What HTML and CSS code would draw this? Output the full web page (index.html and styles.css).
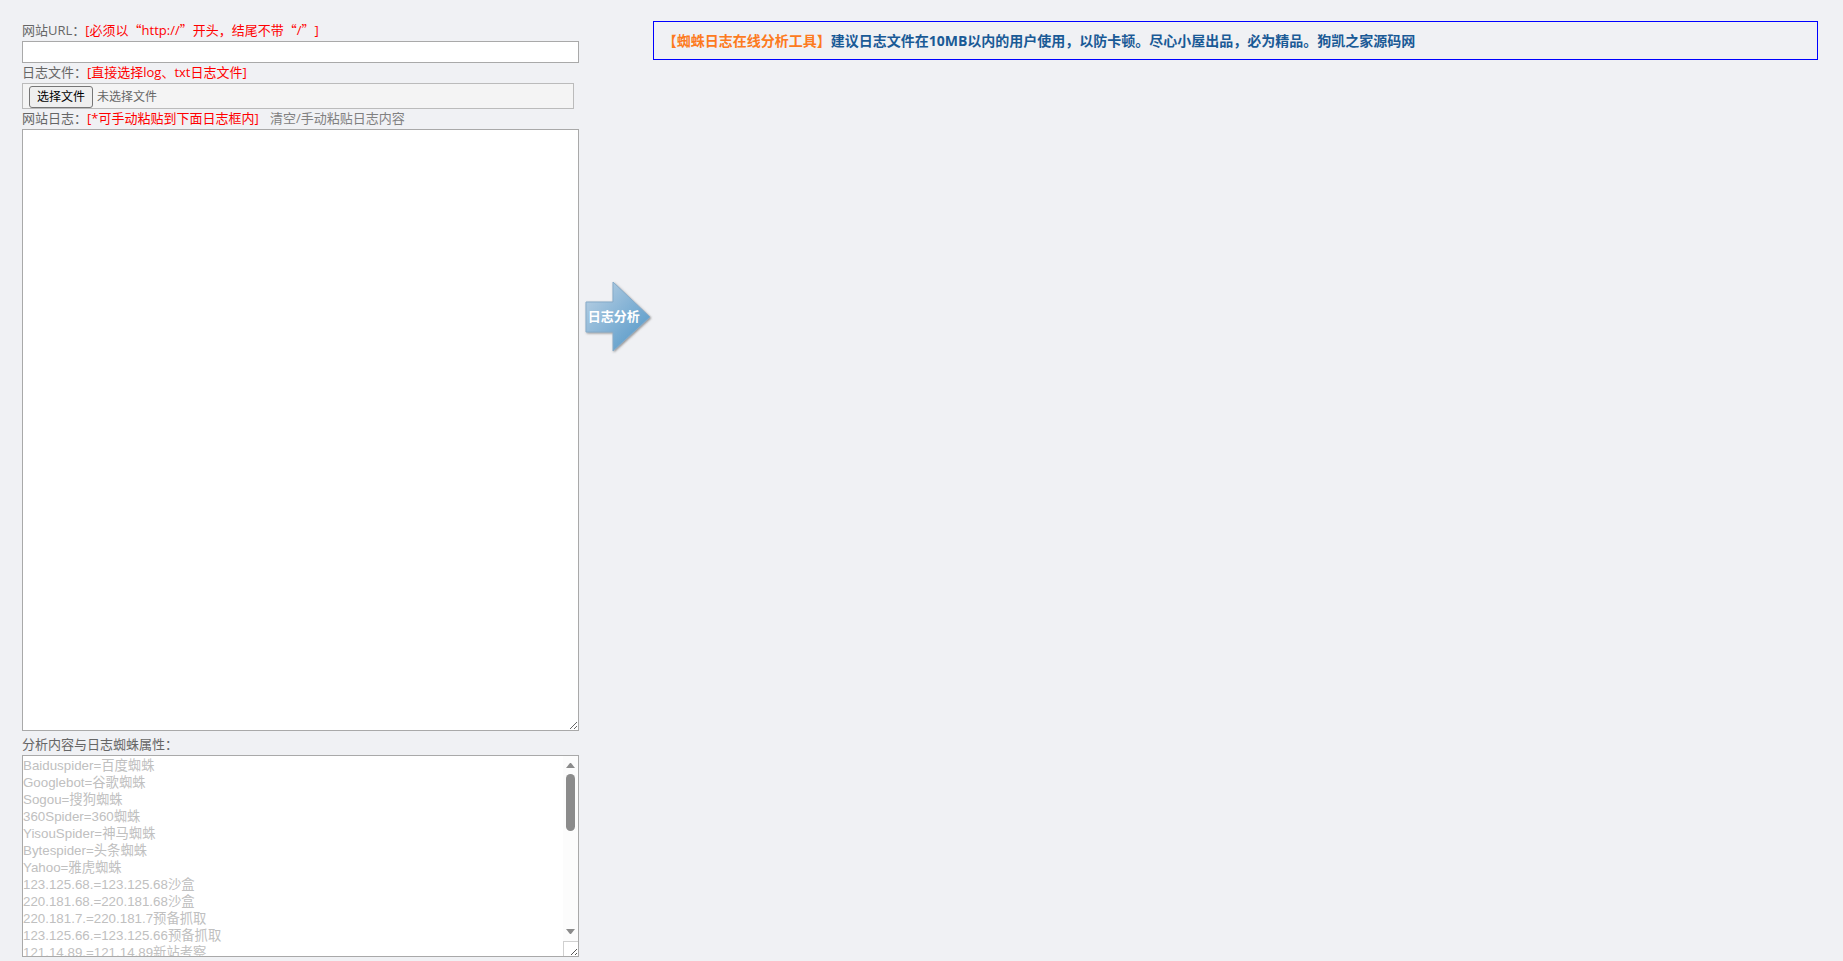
FILE: index.html
```html
<!DOCTYPE html>
<html lang="zh-CN">
<head>
    <meta charset="UTF-8">
    <meta name="viewport" content="width=device-width, initial-scale=1.0">
    <title>蜘蛛日志在线分析工具</title>
    <link rel="stylesheet" href="styles.css">
</head>
<body>

<form class="main" action="#" method="post" enctype="multipart/form-data">
    <div class="left">
        <div class="row-title">
            <label for="url">网站URL：</label><span class="red">[必须以<span class="quote">“</span>http://<span class="quote">”</span>开头，结尾不带<span class="quote">“</span>/<span class="quote">”</span>]</span>
        </div>
        <input type="text" class="url" id="url" name="url">

        <div class="row-title">
            <label for="logfile">日志文件：</label><span class="red">[直接选择log、txt日志文件]</span>
        </div>
        <div class="file-box">
            <label class="file-button">选择文件<input type="file" id="logfile" name="logfile" accept=".log,.txt"></label>
            <span class="file-name">未选择文件</span>
        </div>

        <div class="row-title">
            <label for="log">网站日志：</label><span class="red">[*可手动粘贴到下面日志框内]</span>
            <a class="clear" href="#">清空/手动粘贴日志内容</a>
        </div>
        <textarea class="log" id="log" name="log"></textarea>

        <div class="row-title spider-title">
            <label for="spider">分析内容与日志蜘蛛属性：</label>
        </div>
        <div class="spider-box">
            <textarea class="spider" id="spider" name="spider">Baiduspider=百度蜘蛛
Googlebot=谷歌蜘蛛
Sogou=搜狗蜘蛛
360Spider=360蜘蛛
YisouSpider=神马蜘蛛
Bytespider=头条蜘蛛
Yahoo=雅虎蜘蛛
123.125.68.=123.125.68沙盒
220.181.68.=220.181.68沙盒
220.181.7.=220.181.7预备抓取
123.125.66.=123.125.66预备抓取
121.14.89.=121.14.89新站考察</textarea>
            <div class="scrollbar" aria-hidden="true">
                <svg width="9" height="5" viewBox="0 0 9 5"><path d="M0 5L4 0H5L9 5Z" fill="#8b8b8b"/></svg>
                <div class="thumb"></div>
                <svg width="9" height="5" viewBox="0 0 9 5"><path d="M0 0L4 5H5L9 0Z" fill="#8b8b8b"/></svg>
            </div>
            <div class="corner" aria-hidden="true">
                <svg width="15" height="15" viewBox="0 0 15 15"><path d="M7 13L13 7M11 13L13 11" fill="none" stroke="#555" stroke-width="1"/></svg>
            </div>
        </div>
    </div>

    <div class="middle">
        <button type="submit" class="arrow">
            <svg width="70" height="76" viewBox="0 0 70 76" aria-hidden="true">
                <defs>
                    <linearGradient id="arrowFill" x1="0" y1="0" x2="1" y2="1">
                        <stop offset="0.1" stop-color="#b4cde2"/>
                        <stop offset="0.8" stop-color="#62a0cc"/>
                    </linearGradient>
                    <filter id="arrowShadow" x="-10%" y="-10%" width="125%" height="125%">
                        <feDropShadow dx="1" dy="1" stdDeviation="1" flood-color="#555" flood-opacity="0.6"/>
                    </filter>
                </defs>
                <path d="M2 23H29V3L66 38L29 72V53H2Z" fill="url(#arrowFill)" stroke="#86abc9" stroke-width="1" filter="url(#arrowShadow)"/>
            </svg>
            <span class="arrow-text">日志分析</span>
        </button>
    </div>

    <div class="right">
        <div class="notice"><span class="orange">【蜘蛛日志在线分析工具】</span>建议日志文件在10MB以内的用户使用，以防卡顿。尽心小屋出品，必为精品。狗凯之家源码网</div>
    </div>
</form>

</body>
</html>
```
FILE: styles.css
```css
* {
    box-sizing: border-box;
}
body {
    margin: 0;
    padding: 21px 25px 4px 22px;
    background: #f0f1f4;
    color: #666;
    font-family: "Open Sans", "Noto Sans CJK SC", sans-serif;
    font-size: 13px;
    line-height: 18px;
    text-spacing-trim: space-all;
}
.main {
    display: grid;
    grid-template-columns: 31% 74px 1fr;
}

/* left column */
.row-title {
    height: 20px;
    white-space: nowrap;
}
.spider-title {
    margin-top: 4px;
}
.red {
    color: #f00;
}
.quote {
    font-family: "Noto Sans CJK SC", sans-serif;
}
.clear {
    margin-left: 8px;
    color: #808080;
    text-decoration: none;
}
.url,
.log,
.spider {
    display: block;
    width: 100%;
    margin: 0;
    border: 1px solid #a9a9a9;
    border-radius: 0;
    background: #fff;
}
.url {
    height: 22px;
    padding: 1px 4px;
}
.file-box {
    display: flex;
    align-items: center;
    gap: 4px;
    height: 26px;
    margin-right: 5px;
    padding: 1px 6px 0;
    border: 1px solid #bbb;
    background: #f4f4f4;
    font-size: 12px;
    line-height: 20px;
}
.file-button {
    position: relative;
    height: 22px;
    padding: 0 7px;
    border: 1px solid #767676;
    border-radius: 3px;
    background: #efefef;
    color: #000;
    overflow: hidden;
}
.file-button input {
    position: absolute;
    top: 0;
    right: 0;
    opacity: 0;
}
.log,
.spider {
    padding: 1px 0;
    font-family: "Liberation Sans", "Noto Sans CJK SC", sans-serif;
    line-height: 17px;
}
.log {
    height: 602px;
}
.spider-box {
    position: relative;
}
.spider {
    height: 202px;
    color: #c0c0c0;
    resize: none;
}

/* scrollbar lies over the right edge of the textarea */
.scrollbar {
    position: absolute;
    top: 1px;
    right: 1px;
    bottom: 16px;
    display: flex;
    flex-direction: column;
    align-items: center;
    width: 15px;
    padding: 7px 0;
    background: #fcfcfc;
}
.scrollbar svg {
    display: block;
}
.thumb {
    width: 9px;
    height: 57px;
    margin: 6px 0 auto;
    border-radius: 5px;
    background: #8b8b8b;
}
.corner {
    position: absolute;
    right: 1px;
    bottom: 1px;
    width: 15px;
    height: 15px;
    border-top: 1px solid #d0d0d0;
    border-left: 1px solid #d0d0d0;
    background: #fff;
}
.corner svg {
    display: block;
}

/* arrow button */
.middle {
    padding-top: 258px;
    padding-left: 5px;
}
.arrow {
    position: relative;
    display: block;
    padding: 0;
    border: 0;
    background: none;
    cursor: pointer;
}
.arrow svg {
    display: block;
}
.arrow-text {
    position: absolute;
    top: 27px;
    left: 4px;
    color: #fff;
    font: bold 13px/20px "Noto Sans CJK SC", sans-serif;
}

/* right column */
.notice {
    padding: 9px;
    border: 1px solid #00f;
    color: #1a5a96;
    font-size: 14px;
    font-weight: bold;
    line-height: 19px;
}
.orange {
    color: #fd7a20;
}
```
